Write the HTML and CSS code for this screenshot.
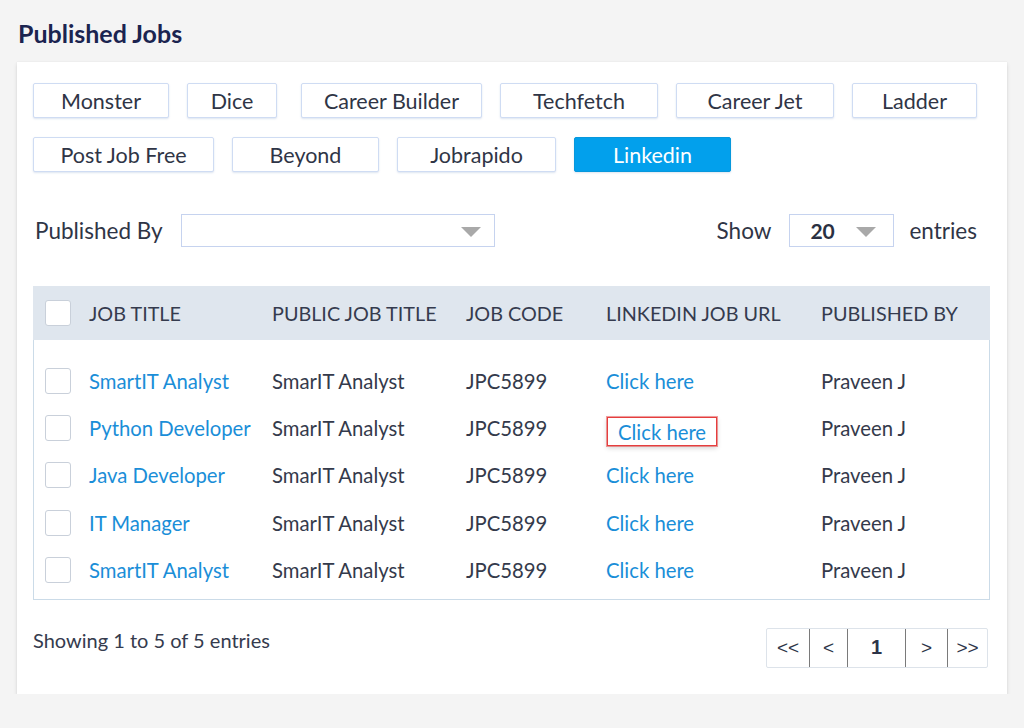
FILE: index.html
```html
<!DOCTYPE html>
<html>
<head>
<meta charset="utf-8">
<link rel="stylesheet" href="styles.css">
</head>
<body>
<h1 class="page-title">Published Jobs</h1>
<div class="card">
  <div class="boards">
    <div class="board-row">
      <button class="board b-monster">Monster</button>
      <button class="board b-dice">Dice</button>
      <button class="board b-cb">Career Builder</button>
      <button class="board b-tf">Techfetch</button>
      <button class="board b-cj">Career Jet</button>
      <button class="board b-ladder">Ladder</button>
    </div>
    <div class="board-row">
      <button class="board b-pjf">Post Job Free</button>
      <button class="board b-beyond">Beyond</button>
      <button class="board b-jr">Jobrapido</button>
      <button class="board b-li active">Linkedin</button>
    </div>
  </div>

  <div class="filters">
    <div class="filter-left">
      <span class="label">Published By</span>
      <div class="select select-wide"><span class="caret"></span></div>
    </div>
    <div class="filter-right">
      <span class="label">Show</span>
      <div class="select select-small"><span class="sel-val">20</span><span class="caret"></span></div>
      <span class="label">entries</span>
    </div>
  </div>

  <div class="table">
    <div class="thead trow">
      <div class="cell"><span class="check"></span></div>
      <div class="cell">JOB TITLE</div>
      <div class="cell">PUBLIC JOB TITLE</div>
      <div class="cell">JOB CODE</div>
      <div class="cell">LINKEDIN JOB URL</div>
      <div class="cell">PUBLISHED BY</div>
    </div>
    <div class="tbody">
      <div class="trow">
        <div class="cell"><span class="check"></span></div>
        <div class="cell link">SmartIT Analyst</div>
        <div class="cell">SmarIT Analyst</div>
        <div class="cell">JPC5899</div>
        <div class="cell link">Click here</div>
        <div class="cell">Praveen J</div>
      </div>
      <div class="trow">
        <div class="cell"><span class="check"></span></div>
        <div class="cell link">Python Developer</div>
        <div class="cell">SmarIT Analyst</div>
        <div class="cell">JPC5899</div>
        <div class="cell link"><span class="highlight">Click here</span></div>
        <div class="cell">Praveen J</div>
      </div>
      <div class="trow">
        <div class="cell"><span class="check"></span></div>
        <div class="cell link">Java Developer</div>
        <div class="cell">SmarIT Analyst</div>
        <div class="cell">JPC5899</div>
        <div class="cell link">Click here</div>
        <div class="cell">Praveen J</div>
      </div>
      <div class="trow">
        <div class="cell"><span class="check"></span></div>
        <div class="cell link">IT Manager</div>
        <div class="cell">SmarIT Analyst</div>
        <div class="cell">JPC5899</div>
        <div class="cell link">Click here</div>
        <div class="cell">Praveen J</div>
      </div>
      <div class="trow">
        <div class="cell"><span class="check"></span></div>
        <div class="cell link">SmartIT Analyst</div>
        <div class="cell">SmarIT Analyst</div>
        <div class="cell">JPC5899</div>
        <div class="cell link">Click here</div>
        <div class="cell">Praveen J</div>
      </div>
    </div>
  </div>

  <div class="footer">
    <div class="showing">Showing 1 to 5 of 5 entries</div>
    <div class="pager">
      <span class="pg pg-first">&lt;&lt;</span>
      <span class="pg pg-prev">&lt;</span>
      <span class="pg pg-num">1</span>
      <span class="pg pg-next">&gt;</span>
      <span class="pg pg-last">&gt;&gt;</span>
    </div>
  </div>
</div>
</body>
</html>
```

FILE: styles.css
```css
* { box-sizing: border-box; }
html, body { margin: 0; padding: 0; }
body {
  background: #f4f4f4;
  font-family: "Lato", "Liberation Sans", sans-serif;
  color: #2f3546;
  padding: 17px 17px 0 17px;
}
.page-title {
  margin: 0 0 0 1px;
  font-size: 25px;
  font-weight: 700;
  color: #1b2450;
  line-height: 32px;
  height: 45px;
}
.card {
  background: #fff;
  width: 990px;
  height: 632px;
  padding: 21px 17px 0 16px;
  box-shadow: 0 2px 4px rgba(0,0,0,0.12), 0 0 1px rgba(0,0,0,0.08);
}
.boards { display: flex; flex-direction: column; gap: 19px; }
.board-row { display: flex; gap: 18px; }
.board {
  font-family: inherit;
  font-size: 21.5px;
  color: #2f3546;
  background: #fff;
  border: 1px solid #cfdcf3;
  border-radius: 2px;
  height: 35px;
  padding: 0;
  box-shadow: 0 1px 2px rgba(120,150,200,0.25);
}
.b-monster { width: 136px; }
.b-dice { width: 90px; margin-right: 6px; }
.b-cb { width: 181px; }
.b-tf { width: 158px; }
.b-cj { width: 158px; }
.b-ladder { width: 125px; }
.b-pjf { width: 181px; }
.b-beyond { width: 147px; }
.b-jr { width: 159px; }
.b-li { width: 157px; }
.board.active {
  background: #02a0ec;
  border-color: #0798dc;
  color: #fff;
}
.filters {
  display: flex;
  justify-content: space-between;
  align-items: center;
  margin-top: 42px;
  padding-left: 2px;
  padding-right: 13px;
}
.filter-left, .filter-right { display: flex; align-items: center; }
.label { font-size: 22.5px; color: #2f3546; }
.select {
  position: relative;
  height: 33px;
  border: 1px solid #c6d3ef;
  background: #fff;
  display: flex;
  align-items: center;
}
.select-wide { width: 314px; margin-left: 18px; }
.select-small { width: 105px; margin: 0 15px 0 18px; padding-left: 20px; }
.sel-val { font-size: 21px; font-weight: 700; color: #2a3042; }
.caret {
  position: absolute;
  right: 13px;
  top: 12px;
  width: 0; height: 0;
  border-left: 10px solid transparent;
  border-right: 10px solid transparent;
  border-top: 10px solid #a9a9a9;
}
.select-small .caret { right: 17px; }
.table { margin-top: 39px; width: 957px; }
.trow {
  display: grid;
  grid-template-columns: 44px 183px 194px 140px 215px 1fr;
  padding-left: 12px;
  align-items: center;
}
.thead {
  background: #dfe6ee;
  height: 54px;
  font-size: 19.8px;
  color: #353b4e;
}
.tbody {
  border: 1px solid #cbdbe8;
  border-top: none;
  padding: 17px 0 5px 0;
}
.tbody .trow { height: 47.4px; padding-left: 11px; font-size: 20.3px; color: #343a4b; }
.cell { white-space: nowrap; }
.check {
  display: block;
  width: 26px; height: 26px;
  background: #fff;
  border: 1px solid #c9d0da;
  border-radius: 3px;
}
.link { color: #1a8ed8; }
.highlight {
  display: inline-block;
  margin-left: 1px;
  margin-top: 7px;
  padding: 2px 10px 1px 10px;
  border: 1px solid #e53e3e;
  outline: 1px solid rgba(229,62,62,0.5);
  box-shadow: 0 2px 5px rgba(0,0,0,0.18);
  background: #fff;
}
.footer {
  display: flex;
  justify-content: space-between;
  align-items: flex-start;
  margin-top: 28px;
  padding-right: 2px;
}
.showing { font-size: 20px; color: #353b4e; margin-top: 0; }
.pager {
  display: flex;
  height: 40px;
  border: 1px solid #dde3ea;
  border-radius: 2px;
  font-family: "Liberation Sans", Arial, sans-serif;
  font-size: 19px;
  color: #2d3448;
}
.pg {
  display: flex;
  align-items: center;
  justify-content: center;
  border-left: 1px solid #7a7a7a;
}
.pg-first { border-left: none; width: 42px; }
.pg-prev { width: 38px; }
.pg-num { width: 58px; font-weight: 700; font-size: 20px; }
.pg-next { width: 42px; }
.pg-last { width: 40px; }
```
